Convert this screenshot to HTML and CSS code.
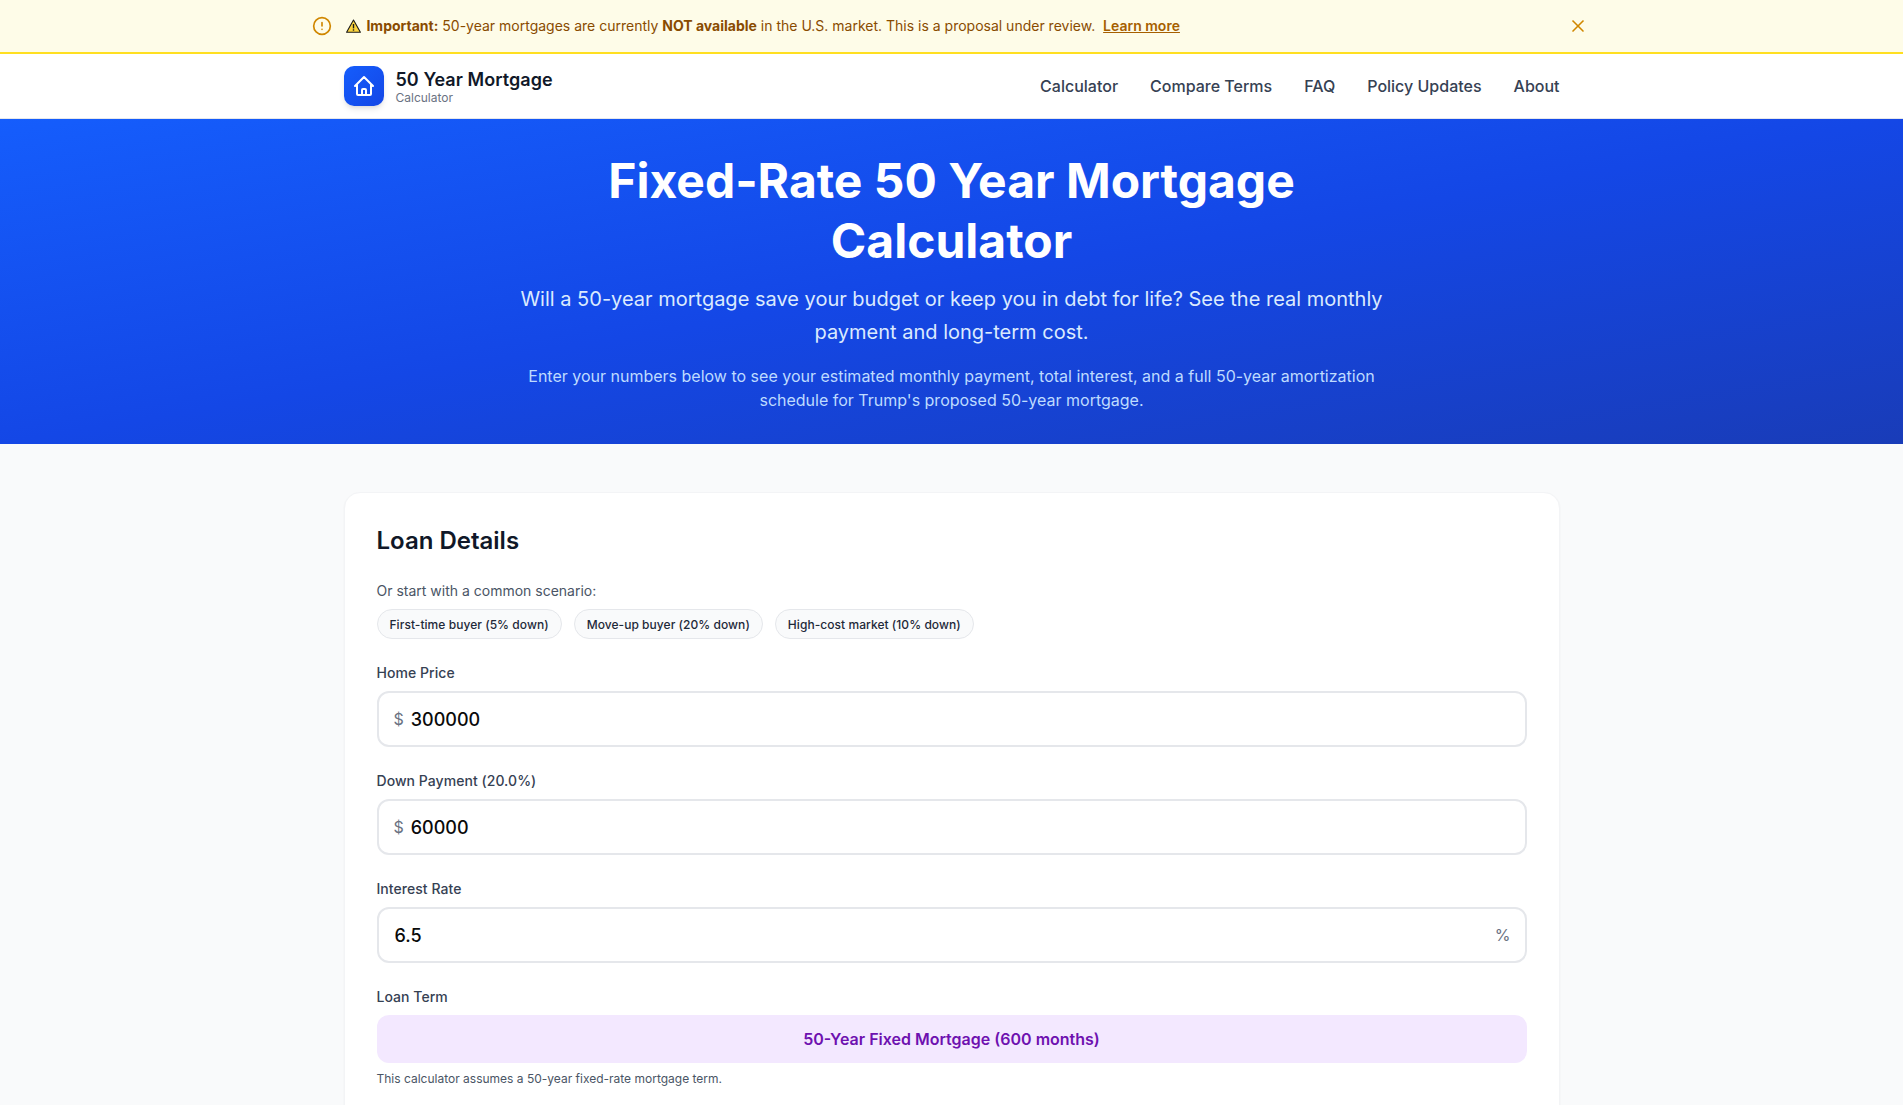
FILE: index.html
```html
<!DOCTYPE html>
<html lang="en">
  <head>
    <meta charset="UTF-8" />
    <meta name="viewport" content="width=device-width, initial-scale=1.0" />
    <title>50 Year Mortgage Calculator</title>
    <link rel="stylesheet" href="styles.css">
  </head>
  <body>
    <div class="notice">
      <div class="notice-inner">
        <svg class="notice-icon" width="20" height="20" viewBox="0 0 24 24" fill="none" stroke="currentColor" stroke-width="2" stroke-linecap="round" stroke-linejoin="round">
          <circle cx="12" cy="12" r="10"></circle>
          <path d="M12 8v4"></path>
          <path d="M12 16h.01"></path>
        </svg>
        <p class="notice-text">
          <svg class="warn-icon" width="15" height="14" viewBox="0 0 15 14">
            <path d="M7.5 1 14.4 13.3H.6z" fill="#fcd53f" stroke="#1a1a1a" stroke-width="1.1" stroke-linejoin="round"></path>
            <path d="M7.5 5v4.4" stroke="#1a1a1a" stroke-width="1.4"></path>
            <path d="M7.5 10.3v1.4" stroke="#1a1a1a" stroke-width="1.4"></path>
          </svg>
          <strong>Important:</strong> 50-year mortgages are currently <strong>NOT available</strong> in the U.S. market. This is a proposal under review.
          <a href="#" class="notice-link">Learn more</a>
        </p>
        <button class="notice-close" aria-label="Dismiss">
          <svg width="20" height="20" viewBox="0 0 24 24" fill="none" stroke="currentColor" stroke-width="2" stroke-linecap="round" stroke-linejoin="round">
            <path d="M18 6 6 18"></path>
            <path d="m6 6 12 12"></path>
          </svg>
        </button>
      </div>
    </div>

    <header class="site-header">
      <div class="header-inner">
        <a href="#" class="brand">
          <span class="brand-mark">
            <svg width="24" height="24" viewBox="0 0 24 24" fill="none" stroke="currentColor" stroke-width="2" stroke-linecap="round" stroke-linejoin="round">
              <path d="M3 12l2-2m0 0l7-7 7 7M5 10v10a1 1 0 0 0 1 1h3m10-11l2 2m-2-2v10a1 1 0 0 1-1 1h-3m-6 0a1 1 0 0 0 1-1v-4a1 1 0 0 1 1-1h2a1 1 0 0 1 1 1v4a1 1 0 0 0 1 1m-6 0h6"></path>
            </svg>
          </span>
          <span class="brand-text">
            <span class="brand-name">50 Year Mortgage</span>
            <span class="brand-sub">Calculator</span>
          </span>
        </a>
        <nav class="main-nav">
          <a href="#">Calculator</a>
          <a href="#">Compare Terms</a>
          <a href="#">FAQ</a>
          <a href="#">Policy Updates</a>
          <a href="#">About</a>
        </nav>
      </div>
    </header>

    <section class="hero">
      <h1>Fixed-Rate 50 Year Mortgage Calculator</h1>
      <p class="hero-lead">Will a 50-year mortgage save your budget or keep you in debt for life? See the real monthly payment and long-term cost.</p>
      <p class="hero-note">Enter your numbers below to see your estimated monthly payment, total interest, and a full 50-year amortization schedule for Trump's proposed 50-year mortgage.</p>
    </section>

    <main class="content">
      <section class="card">
        <h2>Loan Details</h2>
        <div class="scenarios">
          <p class="scenarios-label">Or start with a common scenario:</p>
          <div class="chips">
            <button class="chip">First-time buyer (5% down)</button>
            <button class="chip">Move-up buyer (20% down)</button>
            <button class="chip">High-cost market (10% down)</button>
          </div>
        </div>

        <div class="field">
          <label for="homePrice">Home Price</label>
          <div class="input-wrap">
            <span class="affix">$</span>
            <input type="text" id="homePrice" value="300000" />
          </div>
        </div>

        <div class="field">
          <label for="downPayment">Down Payment (20.0%)</label>
          <div class="input-wrap">
            <span class="affix">$</span>
            <input type="text" id="downPayment" value="60000" />
          </div>
        </div>

        <div class="field">
          <label for="rate">Interest Rate</label>
          <div class="input-wrap input-wrap-suffix">
            <input type="text" id="rate" value="6.5" />
            <span class="affix">%</span>
          </div>
        </div>

        <div class="field">
          <label>Loan Term</label>
          <div class="term">50-Year Fixed Mortgage (600 months)</div>
          <p class="field-hint">This calculator assumes a 50-year fixed-rate mortgage term.</p>
        </div>
      </section>
    </main>
  </body>
</html>
```

FILE: styles.css
```css
* {
  box-sizing: border-box;
}
body {
  margin: 0;
  font-family: Inter, "Liberation Sans", Arial, sans-serif;
  background-color: #f9fafb;
  color: #101828;
}
a {
  text-decoration: none;
  color: inherit;
}
.notice {
  background-color: #fefce8;
  border-bottom: 2px solid #ffdf20;
}
.notice-inner {
  max-width: 1280px;
  margin: 0 auto;
  height: 52px;
  display: flex;
  align-items: center;
  gap: 12px;
}
.notice-icon {
  color: #d08700;
  flex-shrink: 0;
}
.notice-text {
  flex: 1;
  margin: 0;
  padding-left: 2px;
  font-size: 14px;
  line-height: 20px;
  color: #894b00;
}
.notice-text strong {
  font-weight: 700;
}
.warn-icon {
  vertical-align: -2px;
  margin-right: 2px;
}
.notice-link {
  margin-left: 4px;
  font-weight: 600;
  text-decoration: underline;
  color: #a65f00;
}
.notice-close {
  display: flex;
  padding: 4px;
  border: none;
  background: none;
  color: #d08700;
  flex-shrink: 0;
}
.site-header {
  background-color: #fff;
  border-bottom: 1px solid #e5e7eb;
}
.header-inner {
  max-width: 1280px;
  margin: 0 auto;
  padding: 0 32px;
  height: 64px;
  display: flex;
  align-items: center;
  justify-content: space-between;
}
.brand {
  display: flex;
  align-items: center;
  gap: 12px;
}
.brand-mark {
  width: 40px;
  height: 40px;
  border-radius: 10px;
  background: linear-gradient(135deg, #155dfc, #1447e6);
  color: #fff;
  display: flex;
  align-items: center;
  justify-content: center;
  box-shadow: 0 4px 6px -1px rgba(0, 0, 0, 0.1), 0 2px 4px -2px rgba(0, 0, 0, 0.1);
}
.brand-text {
  display: flex;
  flex-direction: column;
  padding-top: 4px;
}
.brand-name {
  font-size: 18px;
  line-height: 20px;
  font-weight: 600;
  letter-spacing: 0.05px;
  color: #101828;
}
.brand-sub {
  font-size: 12px;
  line-height: 16px;
  color: #6a7282;
}
.main-nav {
  display: flex;
  gap: 32px;
}
.main-nav a {
  font-size: 16px;
  line-height: 24px;
  font-weight: 500;
  color: #364153;
}
.hero {
  padding: 32px 16px;
  text-align: center;
  color: #fff;
  background: linear-gradient(to bottom right, #155dfc, #1447e6, #193cb8);
}
.hero h1 {
  max-width: 896px;
  margin: 0 auto 12px;
  font-size: 48px;
  line-height: 60px;
  font-weight: 700;
}
.hero-lead {
  max-width: 896px;
  margin: 0 auto 16px;
  font-size: 20px;
  line-height: 32.5px;
  color: #dbeafe;
}
.hero-note {
  max-width: 896px;
  margin: 0 auto;
  font-size: 16px;
  line-height: 24px;
  color: #bedbff;
}
.content {
  max-width: 1280px;
  margin: 0 auto;
  padding: 48px 32px;
}
.card {
  background-color: #fff;
  border: 1px solid #f3f4f6;
  border-radius: 16px;
  padding: 32px;
  box-shadow: 0 1px 2px rgba(0, 0, 0, 0.05);
}
.card h2 {
  margin: 0 0 24px;
  font-size: 24px;
  line-height: 32px;
  font-weight: 600;
  color: #101828;
}
.scenarios {
  margin-bottom: 24px;
}
.scenarios-label {
  margin: 0 0 8px;
  font-size: 14px;
  line-height: 20px;
  color: #4a5565;
}
.chips {
  display: flex;
  gap: 12px;
}
.chip {
  height: 30px;
  padding: 0 12px;
  font-family: inherit;
  font-size: 12px;
  font-weight: 500;
  letter-spacing: 0.05px;
  color: #1e2939;
  background-color: #f9fafb;
  border: 1px solid #e5e7eb;
  border-radius: 999px;
}
.field {
  margin-bottom: 24px;
}
.field label {
  display: block;
  margin-bottom: 8px;
  font-size: 14px;
  line-height: 20px;
  font-weight: 500;
  letter-spacing: 0.05px;
  color: #364153;
}
.input-wrap {
  height: 56px;
  padding: 0 14px 0 15px;
  display: flex;
  align-items: center;
  gap: 7px;
  background-color: #fff;
  border: 2px solid #e5e7eb;
  border-radius: 12px;
}
.input-wrap-suffix {
  padding-left: 16px;
}
.input-wrap input {
  flex: 1;
  min-width: 0;
  border: none;
  outline: none;
  padding: 0;
  font-family: Inter, "Liberation Sans", Arial, sans-serif;
  font-size: 18px;
  font-weight: 500;
  color: #0a0a0a;
  background: transparent;
}
.affix {
  font-size: 16px;
  color: #6a7282;
}
.term {
  height: 48px;
  display: flex;
  align-items: center;
  justify-content: center;
  font-size: 16px;
  font-weight: 600;
  color: #6e11b0;
  background-color: #f3e8ff;
  border-radius: 12px;
}
.field-hint {
  margin: 8px 0 0;
  font-size: 12px;
  line-height: 16px;
  color: #4a5565;
}
```
